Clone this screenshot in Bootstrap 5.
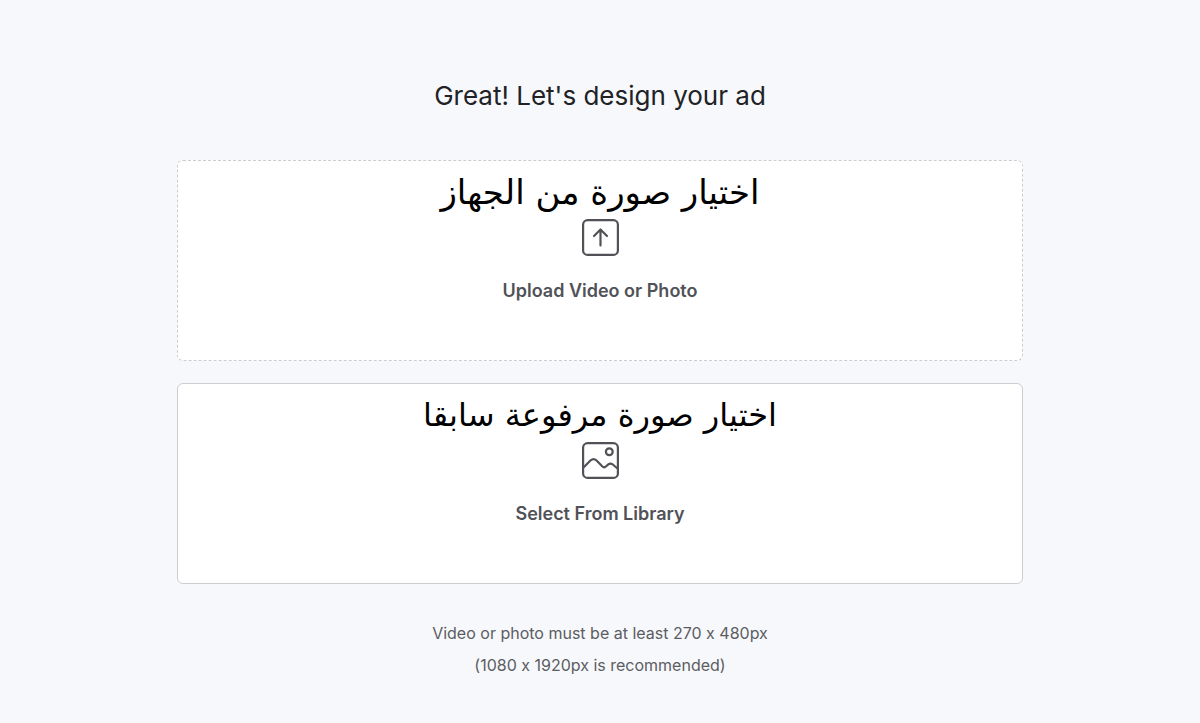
<!DOCTYPE html>
<html lang="en">
<head>
<meta charset="utf-8">
<meta name="viewport" content="width=device-width, initial-scale=1">
<title>Design your ad</title>
<link href="https://cdn.jsdelivr.net/npm/bootstrap@5.3.0/dist/css/bootstrap.min.css" rel="stylesheet">
<style>
body{background:#f7f8fb;color:#202226;font-family:Inter,"Liberation Sans",sans-serif;font-feature-settings:"calt" 0}
.ad-page{max-width:846px;padding-top:76px}
.ad-title{font-size:26px;line-height:40px;margin-bottom:44px;font-weight:400}
.choices{gap:22px}
.choice{background:#fff;border:1px solid #cccdd1;border-radius:6px;min-height:201px;padding:12px 16px;color:#515257}
.choice-dashed{border-style:dashed}
.choice svg{width:37px;height:37px;flex:none}
.choice-ar{font-family:"DejaVu Sans",sans-serif;font-size:32px;line-height:38px;margin-bottom:8px;color:#000}
.choice-dashed .choice-ar{font-size:34px}
.choice-label{font-size:18px;line-height:26px;font-weight:600;margin-top:22px}
.ad-note{font-size:16px;line-height:32px;color:#5c5d62;margin-top:33px}
</style>
</head>
<body>
<main class="ad-page container-fluid px-0 text-center">
<h1 class="ad-title">Great! Let's design your ad</h1>
<div class="choices d-grid">
<button type="button" class="choice choice-dashed d-flex flex-column align-items-center">
<span class="choice-ar" lang="ar" dir="rtl">اختيار صورة من الجهاز</span>
<svg viewBox="0 0 37 37" fill="none" stroke="currentColor" stroke-width="2.2" stroke-linecap="round" stroke-linejoin="round" aria-hidden="true"><rect x="1.1" y="1.1" width="34.8" height="34.8" rx="4.5"/><path d="M18.5 26.5V10.5M12 17l6.5-6.5L25 17"/></svg>
<span class="choice-label">Upload Video or Photo</span>
</button>
<button type="button" class="choice d-flex flex-column align-items-center">
<span class="choice-ar" lang="ar" dir="rtl">اختيار صورة مرفوعة سابقا</span>
<svg viewBox="0 0 37 37" fill="none" stroke="currentColor" stroke-width="2.2" stroke-linejoin="round" aria-hidden="true"><rect x="1.1" y="1.1" width="34.8" height="34.8" rx="4.5"/><circle cx="27.3" cy="9.7" r="3.4"/><path d="M1.5 25.5L8.7 18.3Q11.500 15.8 14.3 18.3L20.2 24.3Q22.2 26.2 24.2 24.3L26.3 22.4Q28.5 20.6 30.8 22.5L35.500 26.5"/></svg>
<span class="choice-label">Select From Library</span>
</button>
</div>
<p class="ad-note mb-0">Video or photo must be at least 270 x 480px<br>(1080 x 1920px is recommended)</p>
</main>
<script src="https://cdn.jsdelivr.net/npm/bootstrap@5.3.0/dist/js/bootstrap.bundle.min.js"></script>
</body>
</html>
